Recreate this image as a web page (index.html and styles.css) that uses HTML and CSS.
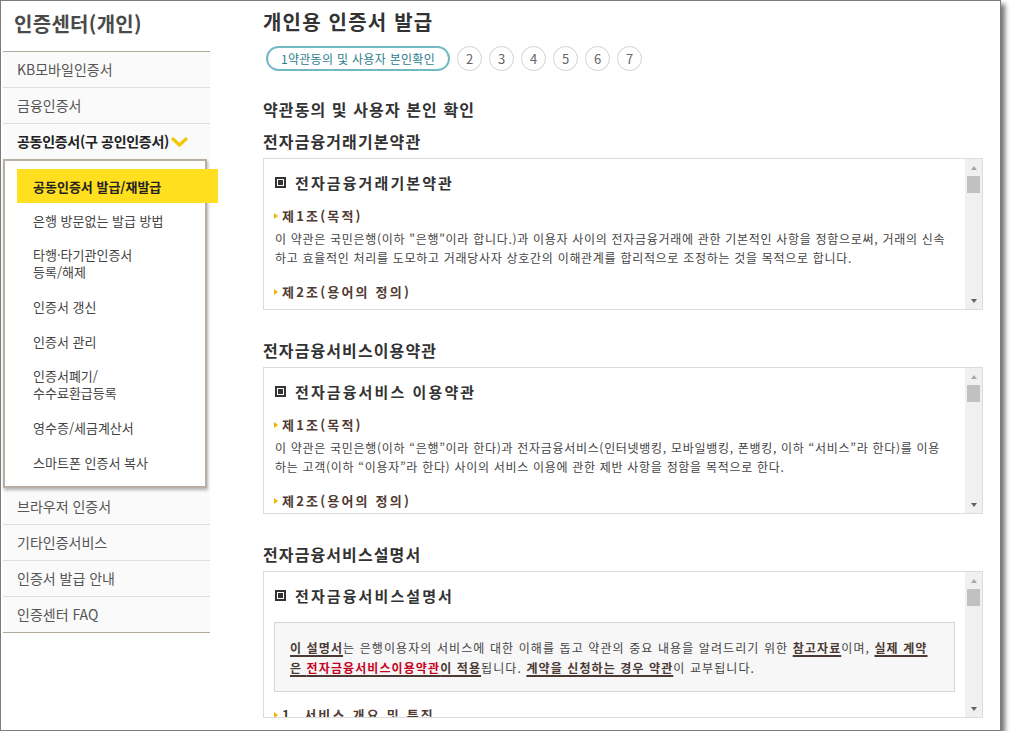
FILE: index.html
```html
<!DOCTYPE html>
<html lang="ko">
<head>
  <meta charset="UTF-8" />
  <title>인증센터(개인) - 개인용 인증서 발급</title>
  <link rel="stylesheet" href="styles.css">
</head>
<body>

<div id="frame">
  <div id="side">
    <h2 class="side-title">인증센터(개인)</h2>
    <ul class="side-menu">
      <li>KB모바일인증서</li>
      <li>금융인증서</li>
      <li class="open">공동인증서(구 공인인증서)<svg class="chev" width="17" height="11" viewBox="0 0 17 11"><polyline points="2,2 8.5,8 15,2" fill="none" stroke="#f7c600" stroke-width="3.2" stroke-linecap="round" stroke-linejoin="round"/></svg></li>
    </ul>
    <ul class="sub-menu">
      <li class="on">공동인증서 발급/재발급</li>
      <li>은행 방문없는 발급 방법</li>
      <li class="two">타행·타기관인증서<br>등록/해제</li>
      <li>인증서 갱신</li>
      <li>인증서 관리</li>
      <li class="two">인증서폐기/<br>수수료환급등록</li>
      <li>영수증/세금계산서</li>
      <li>스마트폰 인증서 복사</li>
    </ul>
    <ul class="side-menu bottom">
      <li>브라우저 인증서</li>
      <li>기타인증서비스</li>
      <li>인증서 발급 안내</li>
      <li>인증센터 FAQ</li>
    </ul>
  </div>

  <div id="content">
    <h1>개인용 인증서 발급</h1>
    <ol class="steps">
      <li class="cur">1약관동의 및 사용자 본인확인</li>
      <li>2</li>
      <li>3</li>
      <li>4</li>
      <li>5</li>
      <li>6</li>
      <li>7</li>
    </ol>

    <h3 class="sec-title">약관동의 및 사용자 본인 확인</h3>

    <h4 class="box-title">전자금융거래기본약관</h4>
    <div class="terms-box first">
      <div class="terms-body">
        <div class="terms-head"><span class="sq"></span>전자금융거래기본약관</div>
        <div class="art">제1조(목적)</div>
        <p>이 약관은 국민은행(이하 "은행"이라 합니다.)과 이용자 사이의 전자금융거래에 관한 기본적인 사항을 정함으로써, 거래의 신속<br>하고 효율적인 처리를 도모하고 거래당사자 상호간의 이해관계를 합리적으로 조정하는 것을 목적으로 합니다.</p>
        <div class="art gap">제2조(용어의 정의)</div>
        <p>① 이 약관에서 사용하는 용어의 의미는 다음 각 호와 같습니다.</p>
      </div>
      <div class="scrollbar"><span class="arr up"></span><span class="thumb"></span><span class="track"></span><span class="arr down"></span></div>
    </div>

    <h4 class="box-title next">전자금융서비스이용약관</h4>
    <div class="terms-box">
      <div class="terms-body">
        <div class="terms-head"><span class="sq"></span>전자금융서비스 이용약관</div>
        <div class="art">제1조(목적)</div>
        <p>이 약관은 국민은행(이하 “은행”이라 한다)과 전자금융서비스(인터넷뱅킹, 모바일뱅킹, 폰뱅킹, 이하 “서비스”라 한다)를 이용<br>하는 고객(이하 “이용자”라 한다) 사이의 서비스 이용에 관한 제반 사항을 정함을 목적으로 한다.</p>
        <div class="art gap">제2조(용어의 정의)</div>
      </div>
      <div class="scrollbar"><span class="arr up"></span><span class="thumb"></span><span class="track"></span><span class="arr down"></span></div>
    </div>

    <h4 class="box-title next">전자금융서비스설명서</h4>
    <div class="terms-box">
      <div class="terms-body">
        <div class="terms-head"><span class="sq"></span>전자금융서비스설명서</div>
        <div class="notice">
          <b>이 설명서</b>는 은행이용자의 서비스에 대한 이해를 돕고 약관의 중요 내용을 알려드리기 위한 <b>참고자료</b>이며, <b>실제 계약</b><br><b>은 <em>전자금융서비스이용약관</em>이 적용</b>됩니다. <b>계약을 신청하는 경우 약관</b>이 교부됩니다.
        </div>
        <div class="art item">1. 서비스 개요 및 특징</div>
      </div>
      <div class="scrollbar"><span class="arr up"></span><span class="thumb"></span><span class="track"></span><span class="arr down"></span></div>
    </div>
  </div>
</div>

</body>
</html>
```

FILE: styles.css
```css
body {
  margin: 0;
  background: #fff;
  font-family: "Noto Sans CJK KR", "Noto Sans", sans-serif;
  color: #444;
}
ul, ol {
  list-style: none;
  margin: 0;
  padding: 0;
}

#frame {
  width: 1001px;
  height: 731px;
  box-sizing: border-box;
  border: 1px solid #7c7c7c;
  box-shadow: 4px 4px 5px rgba(0,0,0,0.55);
  display: flex;
  overflow: hidden;
  background: #fff;
}

/* left menu */
#side {
  width: 207px;
  margin-left: 2px;
  flex-shrink: 0;
}
.side-title {
  margin: 0;
  height: 50px;
  line-height: 45px;
  padding-left: 11px;
  font-size: 20px;
  font-weight: bold;
  color: #4a4a4a;
  letter-spacing: 0.3px;
  border-bottom: 1px solid #b1a79d;
}
.side-menu li {
  height: 35px;
  line-height: 35px;
  padding-left: 14px;
  font-size: 14px;
  color: #555;
  background: #fafafa;
  border-bottom: 1px solid #dedede;
}
.side-menu li.open {
  font-weight: bold;
  color: #222;
  border-bottom: none;
  letter-spacing: -0.3px;
}
.chev {
  vertical-align: -1px;
  margin-left: 2px;
}
.side-menu.bottom {
  margin-top: 1px;
}
.side-menu.bottom li:last-child {
  border-bottom-color: #b1a79d;
}
.sub-menu {
  margin-right: 3px;
  padding: 8px 0 6px;
  border: 2px solid #b8aea4;
  box-shadow: 1px 2px 3px rgba(0,0,0,0.3);
  background: #fff;
  position: relative;
}
.sub-menu li {
  margin-left: 12px;
  padding: 9px 0 9px 16px;
  line-height: 17px;
  font-size: 13px;
  color: #444;
}
.sub-menu li.two {
  padding-top: 8px;
}
.sub-menu li.on {
  margin-right: -13px;
  padding-bottom: 8px;
  background: #ffdf1e;
  font-weight: bold;
  color: #222;
}

/* content */
#content {
  margin-left: 53px;
  width: 720px;
  padding-top: 7px;
  flex-shrink: 0;
}
#content h1 {
  margin: 0;
  font-size: 20px;
  line-height: 28px;
  font-weight: bold;
  letter-spacing: 1.2px;
  color: #333;
}
.steps {
  display: flex;
  gap: 7px;
  margin-top: 10px;
  margin-left: 3px;
}
.steps li {
  width: 25px;
  height: 25px;
  box-sizing: border-box;
  border: 1px solid #d2d2d2;
  border-radius: 50%;
  text-align: center;
  line-height: 23px;
  font-size: 13px;
  color: #666;
}
.steps li.cur {
  width: 184px;
  border: 2px solid #72b9c5;
  border-radius: 13px;
  line-height: 21px;
  font-size: 12px;
  letter-spacing: 0.3px;
  color: #2c7d8c;
}
.sec-title {
  margin: 28px 0 0;
  font-size: 16px;
  line-height: 20px;
  letter-spacing: 1.1px;
  color: #333;
}
.box-title {
  margin: 12px 0 7px;
  font-size: 16px;
  line-height: 20px;
  letter-spacing: 1.1px;
  color: #333;
}
.box-title.next {
  margin-top: 30px;
}

.terms-box {
  display: flex;
  height: 147px;
  box-sizing: border-box;
  border: 1px solid #dcdcdc;
}
.terms-box.first {
  height: 152px;
}
.terms-body {
  flex: 1;
  overflow: hidden;
  padding: 11px 0 0 11px;
}
.terms-head {
  display: flex;
  align-items: center;
  height: 24px;
  font-size: 15px;
  font-weight: bold;
  color: #333;
  letter-spacing: 2.1px;
}
.sq {
  width: 11px;
  height: 11px;
  box-sizing: border-box;
  border: 2px solid #333;
  background: #333;
  box-shadow: inset 0 0 0 1px #fff;
  margin: 0 9px 0 0;
}
.art {
  margin-top: 12px;
  padding-left: 7px;
  position: relative;
  font-size: 13px;
  line-height: 20px;
  font-weight: bold;
  letter-spacing: 2.2px;
  color: #4f3b34;
}
.art::before {
  content: "";
  position: absolute;
  left: -1px;
  top: 7px;
  border-left: 4px solid #f0b400;
  border-top: 3px solid transparent;
  border-bottom: 3px solid transparent;
}
.art.gap {
  margin-top: 15px;
}
.art.item {
  margin-top: 13px;
}
.terms-body p {
  margin: 3px 0 0;
  font-size: 12px;
  line-height: 19px;
  letter-spacing: 0.7px;
  color: #444;
  white-space: nowrap;
}
.notice {
  margin: 15px 10px 0 -1px;
  padding: 15px 15px 13px;
  background: #f7f7f7;
  border: 1px solid #d6d6d6;
  font-size: 12px;
  line-height: 20px;
  letter-spacing: 1.1px;
  color: #444;
  white-space: nowrap;
}
.notice b {
  color: #4b3a34;
  text-decoration: underline;
  text-decoration-thickness: 2px;
  text-underline-offset: 2px;
}
.notice em {
  font-style: normal;
  color: #c8001e;
}

/* fake scrollbar */
.scrollbar {
  width: 17px;
  flex-shrink: 0;
  display: flex;
  flex-direction: column;
  background: #f0f0f0;
}
.scrollbar .arr {
  height: 17px;
  display: flex;
  justify-content: center;
  align-items: center;
}
.scrollbar .arr::after {
  content: "";
  border-left: 3.5px solid transparent;
  border-right: 3.5px solid transparent;
}
.scrollbar .up::after {
  border-bottom: 4px solid #a8a8a8;
}
.scrollbar .down::after {
  border-top: 4px solid #606060;
}
.scrollbar .thumb {
  height: 17px;
  margin: 0 2px;
  background: #c1c1c1;
}
.scrollbar .track {
  flex: 1;
}
```
